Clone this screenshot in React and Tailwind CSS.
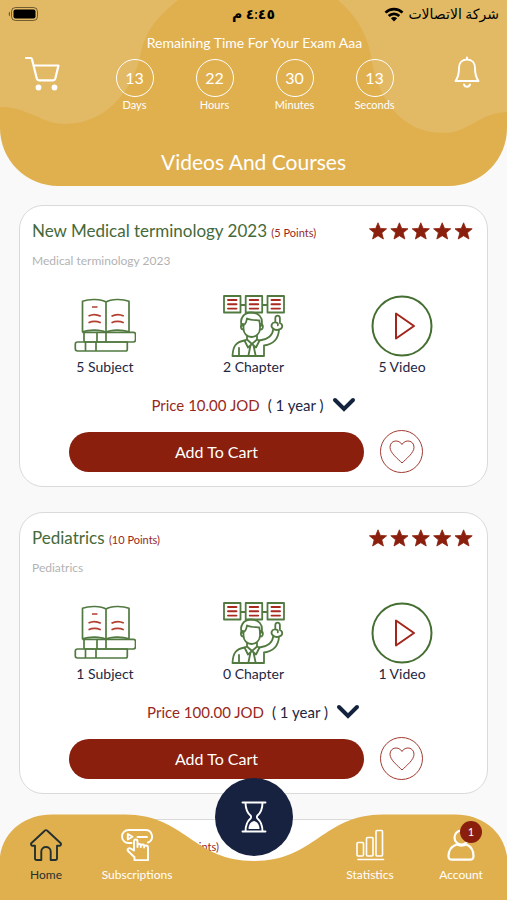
import React from 'react';

const courses = [
  { id: 1, title: 'New Medical terminology 2023', subtitle: 'Medical terminology 2023', points: 5, subjects: 5, chapters: 2, videos: 5, price: '10.00' },
  { id: 2, title: 'Pediatrics', subtitle: 'Pediatrics', points: 10, subjects: 1, chapters: 0, videos: 1, price: '100.00' },
];

const countdown = [
  { label: 'Days', value: 13 },
  { label: 'Hours', value: 22 },
  { label: 'Minutes', value: 30 },
  { label: 'Seconds', value: 13 },
];

function BatteryIcon() {
  return (
    <svg width="31" height="14" viewBox="0 0 31 14" aria-hidden="true">
      <path d="M2 4.5a3 3 0 0 0 0 5z" fill="#000" opacity=".5" />
      <rect x="3.5" y=".5" width="26" height="13" rx="4" fill="none" stroke="#000" strokeOpacity=".5" />
      <rect x="5.5" y="2.5" width="22" height="9" rx="2" />
    </svg>
  );
}

function WifiIcon() {
  return (
    <svg width="20" height="15" viewBox="0 0 20 15" aria-hidden="true">
      <g fill="none" stroke="#000" strokeWidth="2.7">
        <path d="M1.5 5.6a12.2 12.2 0 0 1 17 0" />
        <path d="M4.7 9a7.6 7.6 0 0 1 10.6 0" />
      </g>
      <path d="M6.9 11.2a4.4 4.4 0 0 1 6.2 0L10 14.6z" />
    </svg>
  );
}

function CartIcon() {
  return (
    <svg width="36" height="36" viewBox="0 0 36 36" fill="none" stroke="#fff" strokeWidth="2.2" strokeLinecap="round" strokeLinejoin="round" aria-hidden="true">
      <path d="M2 2h4.7c.7 0 1 .3 1.2 1l4.9 19.500c.3 1.200 1.100 1.800 2.300 1.800h13.900c1.200 0 2-.7 2.300-1.800L34.500 9.500H9.600" />
      <circle cx="14.500" cy="31.500" r="2.900" fill="#fff" stroke="none" />
      <circle cx="30.500" cy="31.500" r="2.900" fill="#fff" stroke="none" />
    </svg>
  );
}

function BellIcon() {
  return (
    <svg width="26" height="32" viewBox="0 0 26 32" fill="none" stroke="#fff" strokeWidth="2" strokeLinecap="round" strokeLinejoin="round" aria-hidden="true">
      <path d="M13 1.500v2M13 3.500c-5 0-8 3.400-8 8.400 0 6-.6 9-3.500 13.100h23c-2.900-4.100-3.500-7.100-3.500-13.100 0-5-3-8.400-8-8.400z" />
      <path d="M10 28.500c.4 1.500 1.600 2.200 3 2.200s2.600-.7 3-2.200" />
    </svg>
  );
}

function Stars() {
  return (
    <svg width="104" height="18" viewBox="0 0 104 18" fill="#8a1f0d" stroke="#8a1f0d" strokeWidth=".8" role="img" aria-label="5 out of 5 stars">
      {[0, 21.4, 42.800, 64.200, 85.600].map((x) => (
        <path key={x} transform={`translate(${x} 0)`} d="M9 .8l2.300 5.600 6.300.4-4.800 4 1.600 6.200L9 13.700 3.600 17l1.600-6.200-4.800-4 6.300-.4z" />
      ))}
    </svg>
  );
}

function BooksIcon() {
  return (
    <svg width="62" height="62" viewBox="0 0 62 62" fill="none" stroke="#527a40" strokeWidth="1.700" strokeLinejoin="round" aria-hidden="true">
      <path d="M32 7c-5-3.200-17-3.200-23.500-.8v30.600c7-2.300 18-2.200 23.500.6 5-2.800 16-2.900 23-.6V6.200C48.500 3.800 37 3.800 32 7zM32 7v30.400" />
      <path d="M8.500 37.300h50.700c1.400 0 2.300.7 2.300 2v5.500c0 1.400-.9 2.200-2.300 2.200H11.200c-.7 0-1.200-.4-1.200-1.200v-8.300M23 37.500V47M32 37.500V47" />
      <path d="M3.500 47h49.800v7.300c0 1.200-.6 1.700-1.600 1.700H3.500c-1.500 0-2.200-.8-2.200-2.200v-4.600c0-1.400.7-2.200 2.200-2.200zM11.500 47v9M22 47v9" />
      <g stroke="#b3402f" strokeWidth="1.700">
        <path d="M18 12h5.500M14.500 21c4-2 8-2 12.300.3M14.500 27.700c4-1.800 8-1.800 12.300 0M37.500 21.300c4-2.300 8-2.300 12.300-.3M37.500 27.700c4-1.800 8-1.800 12.300 0" />
      </g>
    </svg>
  );
}

function ChapterIcon() {
  return (
    <svg width="62" height="62" viewBox="0 0 62 62" fill="none" stroke="#527a40" strokeWidth="1.800" strokeLinejoin="round" strokeLinecap="round" aria-hidden="true">
      <path d="M1 1h16.500v16.500H1zM22.700 1h16.500v16.500H22.700zM44.500 1H61v16.500H44.500zM17.500 10h5.200M39.200 10h5.300" />
      <path stroke="#a92b20" strokeWidth="1.900" d="M5 5h8.500M5 9.300h8.500M5 13.600h8.500M26.700 5h8.500M26.700 9.300h8.500M26.700 13.600h8.500M48.500 5H57M48.500 9.300H57M48.500 13.600H57" />
      <path d="M19 31c-3-7 1.800-13.500 9-13.500 7.600 0 12.500 5 10.500 13M20.500 30c2.500-1 3-4 3.500-6.500 4 2 9 1.500 12.300 2 .4 2 .4 4 1.200 5.500" />
      <path d="M20.500 30v3.500c0 5 3.500 8.500 8 8.500s8.500-3.500 8.500-8.500V30M20.500 29c-3.500-1-3.500 6.500.2 5.500M37.300 29c3.500-1 3.500 6.500-.3 5.500" />
      <path d="M24 41v3.500l5 4.500 5-4.500V41M24 44.500l-2.500 1 3.500 7 4-3.500 4 3.500 3.500-7-2.500-1M27.500 50.500L25.500 60M30.500 50.500l2 9.500" />
      <path d="M21.500 45.500C13 47 10 51 9.500 61H41V50.500c9.500-1.200 14.500-7 15-16M36.500 45.500c8-1 13-4 13.800-11.500M16 53v8" />
      <path d="M50 33.500c-3-2.700-1-6.500 2.300-6.200v-4c0-3.600 4.600-3.600 4.600 0V28c3.400 1.500 3 5.300-.6 6.500-2.300.8-4.800.4-6.300-1zM52.300 27.300c2 0 3 1 2.500 3" />
    </svg>
  );
}

function PlayIcon() {
  return (
    <svg width="62" height="62" viewBox="0 0 62 62" fill="none" aria-hidden="true">
      <circle cx="31" cy="31" r="29.500" stroke="#456f32" strokeWidth="2" />
      <path d="M25 18.500v25L43 31z" stroke="#a3261b" strokeWidth="2" strokeLinejoin="round" />
    </svg>
  );
}

function HomeIcon() {
  return (
    <svg width="32" height="32" viewBox="0 0 32 32" fill="none" stroke="#24302f" strokeWidth="1.900" strokeLinejoin="round" strokeLinecap="round" aria-hidden="true">
      <path d="M14.700 1.700L1.500 14c-1 1-.3 2.800 1.200 2.800H5v12.400C5 30.400 5.600 31 6.800 31h4.500v-8.500c0-6 9.400-6 9.400 0V31h4.500c1.200 0 1.800-.6 1.800-1.800V16.800h2.300c1.500 0 2.200-1.800 1.200-2.800L17.300 1.700c-.8-.8-1.800-.8-2.600 0z" />
    </svg>
  );
}

function SubscriptionsIcon() {
  return (
    <svg width="32" height="32" viewBox="0 0 32 32" fill="none" stroke="#fff" strokeWidth="1.900" strokeLinejoin="round" strokeLinecap="round" aria-hidden="true">
      <path d="M10.500 14H7.500a6.500 6.500 0 0 1 0-13h17a6.500 6.500 0 0 1 2.500 12.500M6.800 5v5.500l4.700-2.700zM16.500 8H26" />
      <path d="M13 21.500V12.500c0-2.600 3.500-2.600 3.500 0V18v-1.500c0-2 3.300-2 3.300 0V18v-1c0-2 3.300-2 3.300 0v1.500-.5c0-2 3.900-2 3.900.4V27v4.200H13.500v-3L7.300 22.300c-1.800-1.900.6-4 2.400-2.700z" />
    </svg>
  );
}

function StatisticsIcon() {
  return (
    <svg width="30" height="32" viewBox="0 0 30 32" fill="none" stroke="#fff" strokeWidth="1.600" strokeLinecap="round" aria-hidden="true">
      <rect x="2" y="13.500" width="6.500" height="13.500" rx="1" />
      <rect x="11.500" y="8.500" width="6.500" height="18.500" rx="1" />
      <rect x="21" y="1.500" width="6.500" height="25.500" rx="1" />
      <path d="M3 30.500h25.500" />
    </svg>
  );
}

function AccountIcon() {
  return (
    <svg width="28" height="32" viewBox="0 0 28 32" fill="none" stroke="#fff" strokeWidth="2.200" strokeLinejoin="round" aria-hidden="true">
      <circle cx="14.500" cy="8.500" r="7" />
      <path d="M9.500 15.500C4.500 17.500 1.500 21.500 1.500 27c0 2.500 1.300 3.700 3.500 3.700h18c2.200 0 3.500-1.200 3.500-3.700 0-5.500-2.500-9.500-7-11.500-3.500 1.500-6.500 1.500-10 0z" />
    </svg>
  );
}

function HourglassIcon() {
  return (
    <svg width="26" height="32" viewBox="0 0 26 32" fill="none" stroke="#fff" strokeWidth="1.900" strokeLinecap="round" strokeLinejoin="round" aria-hidden="true">
      <path d="M1.500 1.500h23M1.500 30.500h23M4.500 1.500c0 7 1.500 10 5 13 .8.8.8 2.200 0 3-3.500 3-5 6-5 13M21.500 1.500c0 7-1.500 10-5 13-.8.8-.8 2.200 0 3 3.500 3 5 6 5 13" />
      <path d="M7.500 28c0-4 2-7.300 5.500-8 3.500.7 5.500 4 5.500 8z" fill="#fff" stroke="none" />
    </svg>
  );
}

function Header() {
  return (
    <header className="relative z-10 shrink-0 overflow-hidden rounded-b-[58px] bg-[#e0b04f] text-white">
      <svg className="absolute left-0 top-0" width="180" height="130" viewBox="0 0 180 130" aria-hidden="true">
        <path d="M0 0h178c-20 16-32 30-37 52-7 38-35 72-76 72-24 0-38-18-65-17z" fill="#e2b964" />
      </svg>
      <svg className="absolute right-0 top-0" width="170" height="135" viewBox="0 0 170 135" aria-hidden="true">
        <path d="M170 0H1c16 14 28 30 33 56 6 42 30 77 72 77 27 0 35-20 64-21z" fill="#e2b964" />
      </svg>
      <div className="relative flex flex-col">
        <div className="grid h-7 grid-cols-3 items-center px-2">
          <BatteryIcon />
          <span className="text-center text-sm font-semibold text-black" dir="rtl">٤:٤٥ م</span>
          <span className="flex items-center justify-end gap-1 whitespace-nowrap text-sm text-black">
            <WifiIcon />
            <span dir="rtl">شركة الاتصالات</span>
          </span>
        </div>
        <div className="flex items-start justify-between pl-6 pr-[22px]">
          <button type="button" aria-label="Cart" className="mt-7 flex w-9 justify-center"><CartIcon /></button>
          <div className="flex flex-col items-center">
            <p className="mt-[3px] text-sm leading-6">Remaining Time For Your Exam Aaa</p>
            <div className="mt-1 flex w-[280px] justify-between">
              {countdown.map((c) => (
                <div key={c.label} className="flex w-10 flex-col items-center">
                  <span className="flex size-[38px] items-center justify-center rounded-full border border-white text-base">{c.value}</span>
                  <span className="text-[11px] leading-4">{c.label}</span>
                </div>
              ))}
            </div>
          </div>
          <button type="button" aria-label="Notifications" className="mt-7 flex w-9 justify-center"><BellIcon /></button>
        </div>
        <h1 className="pb-2 pt-[33px] text-center text-[21px] leading-8">Videos And Courses</h1>
      </div>
    </header>
  );
}

function CourseStat({ icon, children }) {
  return (
    <div className="flex w-20 flex-col items-center">
      {icon}
      <span className="whitespace-nowrap text-sm leading-5 text-[#1d2742]">{children}</span>
    </div>
  );
}

function CardTitle({ title, points }) {
  return (
    <div className="flex items-center justify-between pr-0.5">
      <h2 className="text-[17px] leading-7 text-[#45693a]">
        {title} <span className="text-[11px] leading-4 text-[#98281b]">({points} Points)</span>
      </h2>
      <Stars />
    </div>
  );
}

function CourseCard({ course }) {
  return (
    <li className="rounded-[24px] border border-[#dadada] bg-white px-3 pb-[13px] pt-[11px]">
      <CardTitle title={course.title} points={course.points} />
      <p className="mt-1 text-xs leading-6 text-[#b3b3b3]">{course.subtitle}</p>
      <div className="mt-[22px] flex justify-between px-[33px]">
        <CourseStat icon={<BooksIcon />}>{course.subjects} Subject</CourseStat>
        <CourseStat icon={<ChapterIcon />}>{course.chapters} Chapter</CourseStat>
        <CourseStat icon={<PlayIcon />}>{course.videos} Video</CourseStat>
      </div>
      <button type="button" className="mx-auto mt-4 flex items-center gap-2 text-[15px] leading-6">
        <span className="text-[#98281b]">Price {course.price} JOD</span>
        <span className="text-[#1d2742]">( 1 year )</span>
        <svg width="24" height="16" viewBox="0 0 24 16" fill="none" stroke="#13233d" strokeWidth="4" strokeLinecap="round" aria-hidden="true">
          <path d="M3 3l9 9 9-9" />
        </svg>
      </button>
      <div className="mt-[13px] flex items-center gap-4 pl-[37px] pr-13">
        <button type="button" className="h-10 flex-1 rounded-full bg-[#891f0c] text-base text-white">Add To Cart</button>
        <button type="button" aria-label="Add to favourites" className="flex size-[43px] items-center justify-center rounded-full border border-[#a13a30]">
          <svg width="26" height="24" viewBox="0 0 26 24" fill="none" stroke="#a13a30" aria-hidden="true">
            <path d="M13 23C9 19 1 13 1 7.300 1 0 10-1 13 4.500 16-1 25 0 25 7.300 25 13 17 19 13 23z" />
          </svg>
        </button>
      </div>
    </li>
  );
}

function NavItem({ icon, label, active, badge }) {
  return (
    <a href="#" className={active ? 'relative flex w-[74px] flex-col items-center text-[#24302f]' : 'relative flex w-[74px] flex-col items-center text-white'}>
      {icon}
      <span className="mt-1 text-xs leading-5">{label}</span>
      {badge && (
        <span className="absolute -top-2 right-4 flex size-[22px] items-center justify-center rounded-full bg-[#891f0c] text-[11px] text-white">{badge}</span>
      )}
    </a>
  );
}

function BottomNav() {
  return (
    <nav className="absolute inset-x-0 bottom-0 z-20">
      <svg className="absolute inset-0 h-full w-full" viewBox="0 0 507 86" preserveAspectRatio="none" aria-hidden="true">
        <path d="M0 86V42C4 16 26 .5 52 .5h73C185 .5 193 47 254 47S323 .5 383 .5h72C481 .5 503 16 507 42v44z" fill="#e0b04f" />
      </svg>
      <div className="relative flex justify-between px-[9px] pb-[15px] pt-[15px]">
        <div className="flex gap-[17px]">
          <NavItem icon={<HomeIcon />} label="Home" active />
          <NavItem icon={<SubscriptionsIcon />} label="Subscriptions" />
        </div>
        <div className="flex gap-[17px]">
          <NavItem icon={<StatisticsIcon />} label="Statistics" />
          <NavItem icon={<AccountIcon />} label="Account" badge={1} />
        </div>
      </div>
      <button type="button" aria-label="Exam timer" className="absolute -top-9 left-1/2 flex size-[78px] -translate-x-1/2 items-center justify-center rounded-full bg-[#16223f]">
        <HourglassIcon />
      </button>
    </nav>
  );
}

export default function App() {
  return (
    <div className="relative flex h-screen flex-col overflow-hidden bg-[#f9f9f9] font-['Lato','Noto_Sans','DejaVu_Sans',sans-serif]">
      <Header />
      <main className="min-h-0 flex-1 overflow-y-auto px-[19px] pt-[19px] [scrollbar-width:none]">
        <ul className="flex flex-col gap-[25px]">
          {courses.map((c) => (
            <CourseCard key={c.id} course={c} />
          ))}
          <li className="h-[281px] rounded-[24px] border border-[#dadada] bg-white px-3 pt-[11px]">
            <CardTitle title="General Medicine" points={10} />
          </li>
        </ul>
      </main>
      <BottomNav />
    </div>
  );
}
